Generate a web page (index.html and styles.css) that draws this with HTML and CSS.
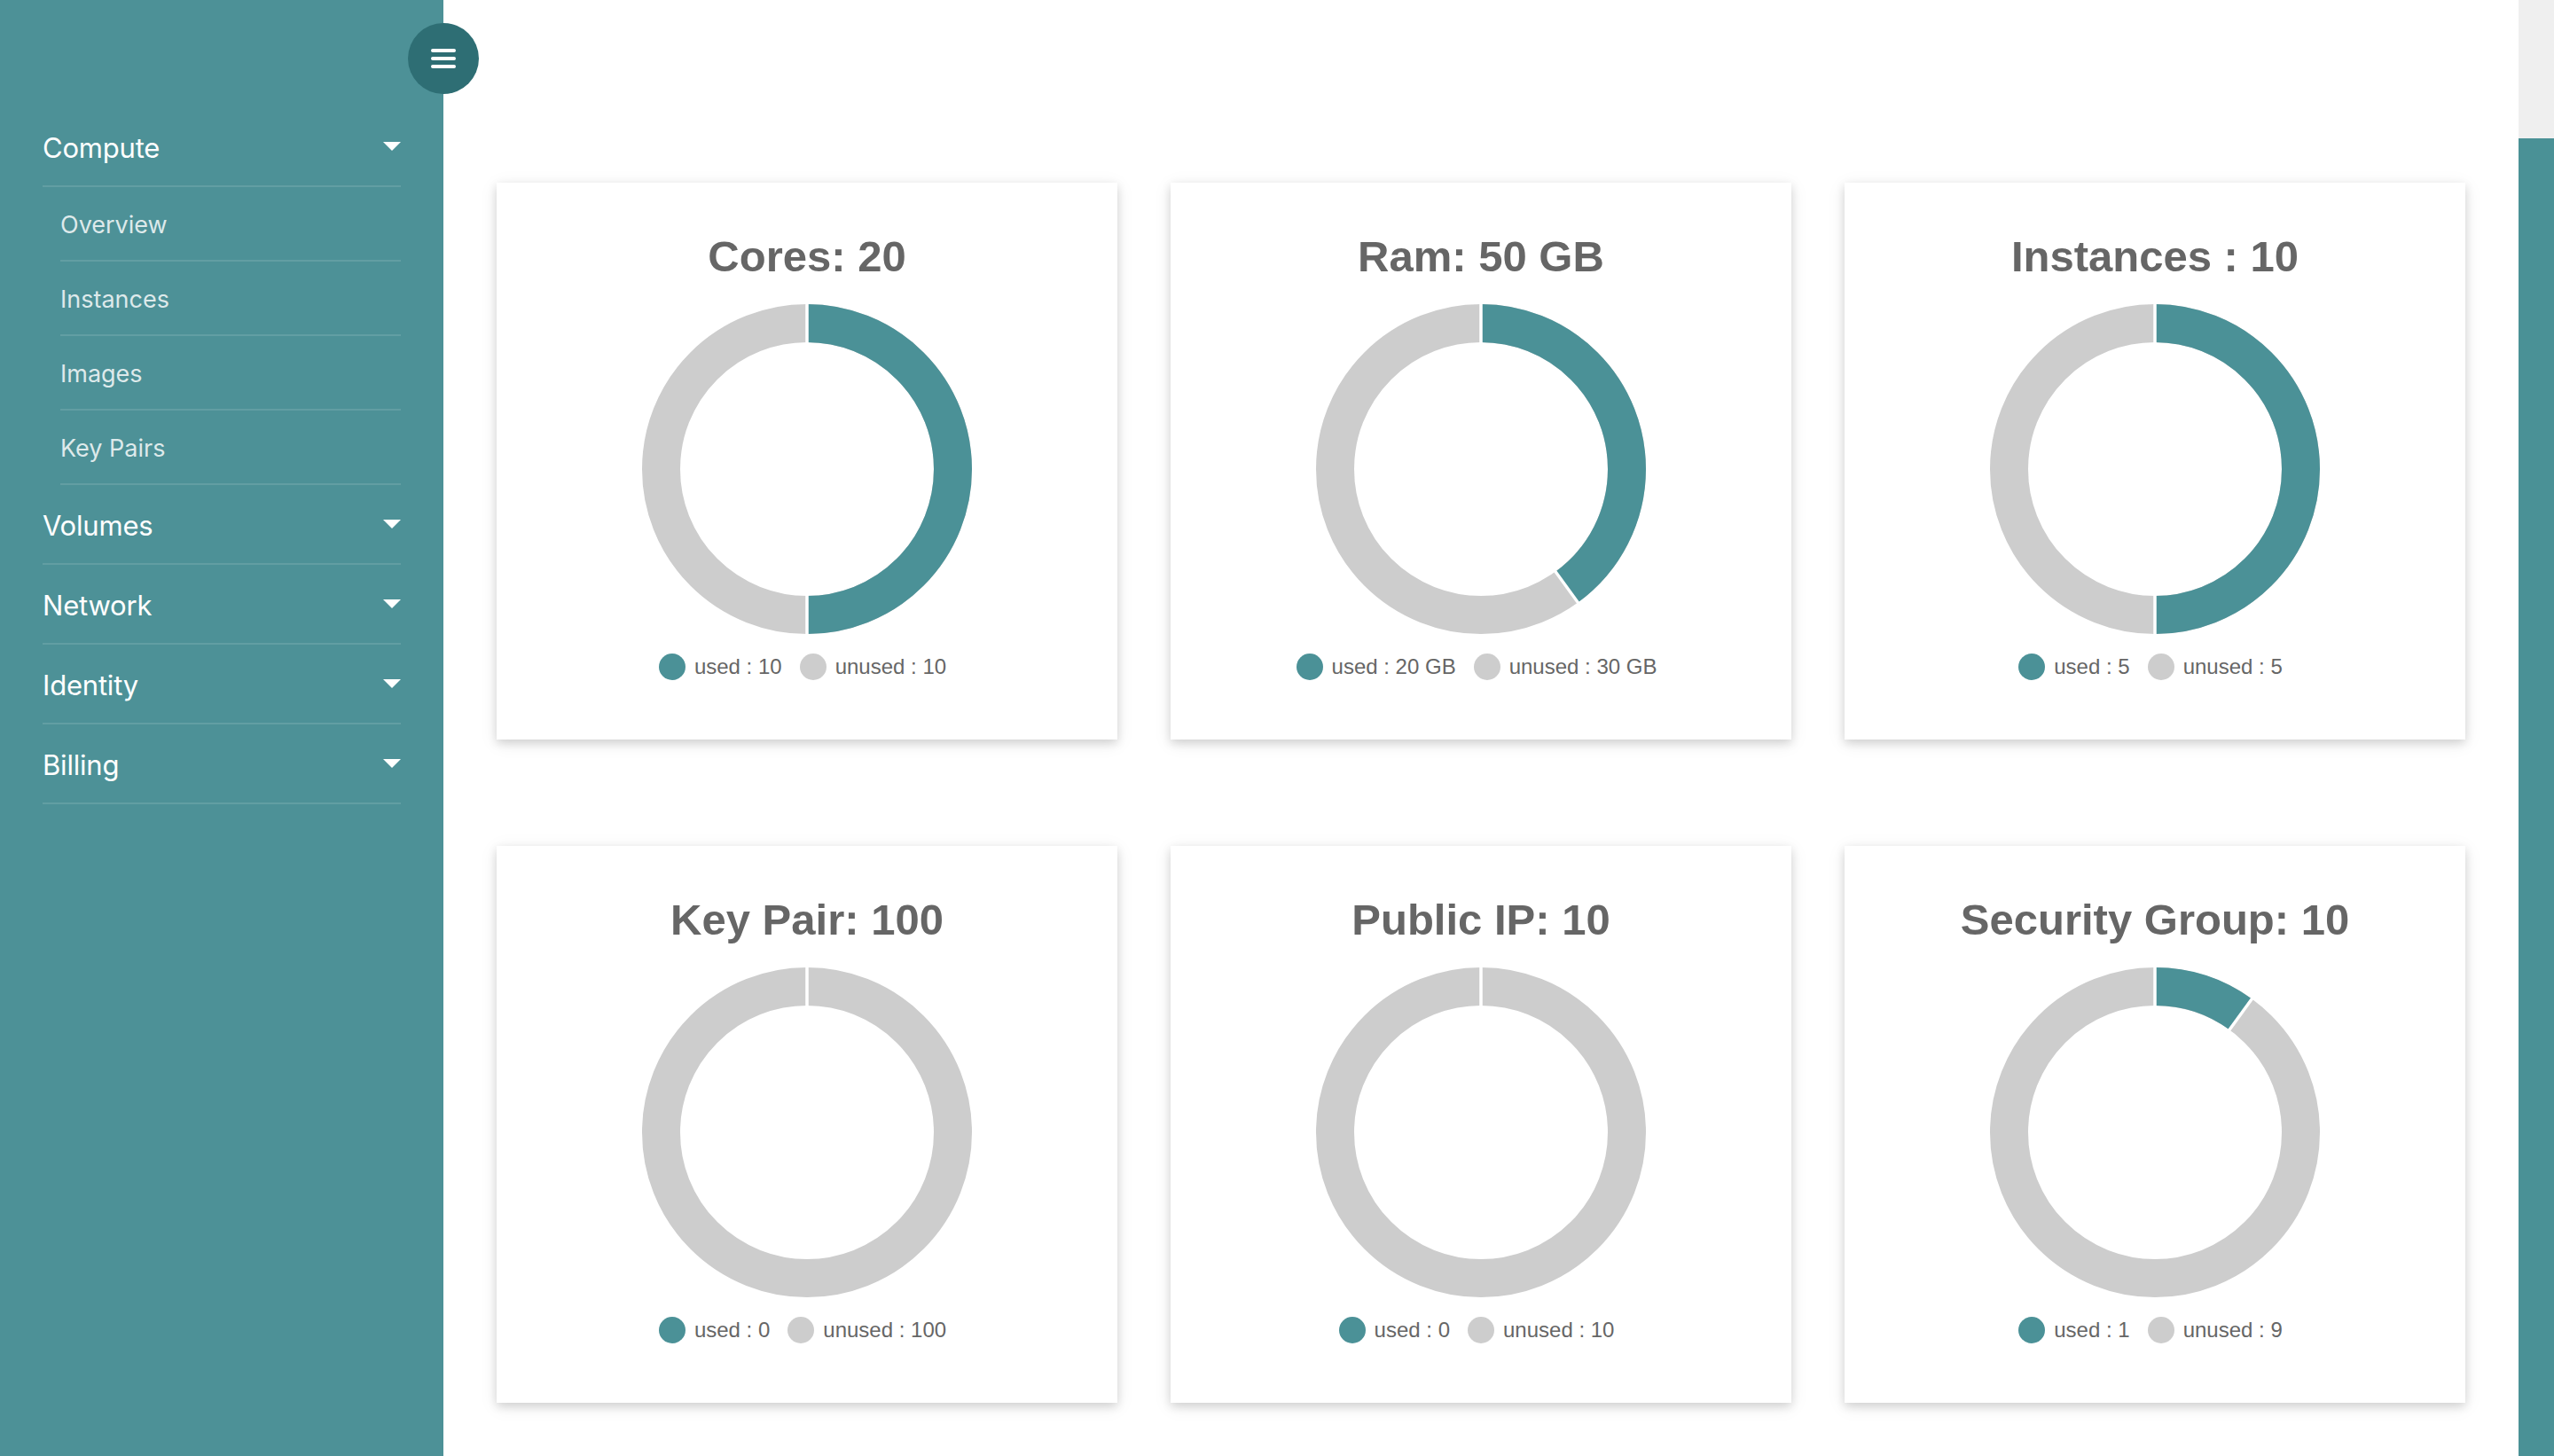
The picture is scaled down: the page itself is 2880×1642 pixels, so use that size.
FILE: index.html
```html
<!DOCTYPE html>
<html lang="en">
<head>
<meta charset="utf-8">
<title>Dashboard</title>
<link rel="stylesheet" href="styles.css">
</head>
<body>
<aside class="sidebar">
  <button class="menu-toggle" aria-label="Toggle menu">
    <span class="bar"></span><span class="bar"></span><span class="bar"></span>
  </button>
  <nav class="nav">
    <div class="nav-item"><span class="nav-label">Compute</span><span class="caret"></span></div>
    <div class="sub-item">Overview</div>
    <div class="sub-item">Instances</div>
    <div class="sub-item">Images</div>
    <div class="sub-item">Key Pairs</div>
    <div class="nav-item"><span class="nav-label">Volumes</span><span class="caret"></span></div>
    <div class="nav-item"><span class="nav-label">Network</span><span class="caret"></span></div>
    <div class="nav-item"><span class="nav-label">Identity</span><span class="caret"></span></div>
    <div class="nav-item"><span class="nav-label">Billing</span><span class="caret"></span></div>
  </nav>
</aside>

<main class="main">
  <div class="grid">
    <section class="card">
      <h2 class="card-title">Cores: 20</h2>
      <svg class="donut" viewBox="-186 -186 372 372" width="372" height="372">
        <circle class="ring-unused" r="164.5"/>
        <circle class="ring-used" r="164.5" pathLength="100" stroke-dasharray="50 100" transform="rotate(-90)"/>
        <line class="sep" x1="0" y1="0" x2="0" y2="-190"/>
        <line class="sep" x1="0" y1="0" x2="0" y2="190"/>
      </svg>
      <div class="legend">
        <span class="dot used"></span><span class="label">used : 10</span>
        <span class="dot unused"></span><span class="label">unused : 10</span>
      </div>
    </section>

    <section class="card">
      <h2 class="card-title">Ram: 50 GB</h2>
      <svg class="donut" viewBox="-186 -186 372 372" width="372" height="372">
        <circle class="ring-unused" r="164.5"/>
        <circle class="ring-used" r="164.5" pathLength="100" stroke-dasharray="40 100" transform="rotate(-90)"/>
        <line class="sep" x1="0" y1="0" x2="0" y2="-190"/>
        <line class="sep" x1="0" y1="0" x2="111.7" y2="153.7"/>
      </svg>
      <div class="legend">
        <span class="dot used"></span><span class="label">used : 20 GB</span>
        <span class="dot unused"></span><span class="label">unused : 30 GB</span>
      </div>
    </section>

    <section class="card">
      <h2 class="card-title">Instances : 10</h2>
      <svg class="donut" viewBox="-186 -186 372 372" width="372" height="372">
        <circle class="ring-unused" r="164.5"/>
        <circle class="ring-used" r="164.5" pathLength="100" stroke-dasharray="50 100" transform="rotate(-90)"/>
        <line class="sep" x1="0" y1="0" x2="0" y2="-190"/>
        <line class="sep" x1="0" y1="0" x2="0" y2="190"/>
      </svg>
      <div class="legend">
        <span class="dot used"></span><span class="label">used : 5</span>
        <span class="dot unused"></span><span class="label">unused : 5</span>
      </div>
    </section>

    <section class="card">
      <h2 class="card-title">Key Pair: 100</h2>
      <svg class="donut" viewBox="-186 -186 372 372" width="372" height="372">
        <circle class="ring-unused" r="164.5"/>
        <line class="sep" x1="0" y1="0" x2="0" y2="-190"/>
      </svg>
      <div class="legend">
        <span class="dot used"></span><span class="label">used : 0</span>
        <span class="dot unused"></span><span class="label">unused : 100</span>
      </div>
    </section>

    <section class="card">
      <h2 class="card-title">Public IP: 10</h2>
      <svg class="donut" viewBox="-186 -186 372 372" width="372" height="372">
        <circle class="ring-unused" r="164.5"/>
        <line class="sep" x1="0" y1="0" x2="0" y2="-190"/>
      </svg>
      <div class="legend">
        <span class="dot used"></span><span class="label">used : 0</span>
        <span class="dot unused"></span><span class="label">unused : 10</span>
      </div>
    </section>

    <section class="card">
      <h2 class="card-title">Security Group: 10</h2>
      <svg class="donut" viewBox="-186 -186 372 372" width="372" height="372">
        <circle class="ring-unused" r="164.5"/>
        <circle class="ring-used" r="164.5" pathLength="100" stroke-dasharray="10 100" transform="rotate(-90)"/>
        <line class="sep" x1="0" y1="0" x2="0" y2="-190"/>
        <line class="sep" x1="0" y1="0" x2="111.7" y2="-153.7"/>
      </svg>
      <div class="legend">
        <span class="dot used"></span><span class="label">used : 1</span>
        <span class="dot unused"></span><span class="label">unused : 9</span>
      </div>
    </section>
  </div>
</main>

<div class="scrollbar"><div class="thumb"></div></div>
</body>
</html>
```

FILE: styles.css
```css
html, body {
  margin: 0;
  padding: 0;
  height: 100%;
}

body {
  display: flex;
  overflow: hidden;
  background: #ffffff;
  font-family: Inter, "Noto Sans", sans-serif;
}

.sidebar {
  position: relative;
  z-index: 2;
  width: 500px;
  flex-shrink: 0;
  height: 100%;
  background: #4d9197;
}

.menu-toggle {
  position: absolute;
  left: 460px;
  top: 26px;
  width: 80px;
  height: 80px;
  border: none;
  border-radius: 50%;
  background: #2e6e74;
  padding: 0;
  display: flex;
  flex-direction: column;
  align-items: center;
  justify-content: center;
  gap: 4.5px;
}

.menu-toggle .bar {
  display: block;
  width: 28px;
  height: 4.5px;
  border-radius: 2px;
  background: #ffffff;
}

.nav {
  padding-top: 121px;
  display: flex;
  flex-direction: column;
}

.nav-item {
  margin-left: 48px;
  width: 404px;
  height: 88px;
  border-bottom: 2px solid rgba(255, 255, 255, 0.12);
  display: flex;
  align-items: center;
  justify-content: space-between;
  color: #ffffff;
  font-size: 31px;
  letter-spacing: -0.2px;
}

.nav-label {
  padding-top: 3px;
}

.caret {
  width: 0;
  height: 0;
  border-left: 10px solid transparent;
  border-right: 10px solid transparent;
  border-top: 10px solid #ffffff;
}

.sub-item {
  margin-left: 68px;
  width: 384px;
  height: 79px;
  padding-top: 3px;
  border-bottom: 2px solid rgba(255, 255, 255, 0.12);
  display: flex;
  align-items: center;
  color: rgba(255, 255, 255, 0.82);
  font-size: 27px;
}

.main {
  flex: 1;
  min-width: 0;
  height: 100%;
}

.grid {
  display: grid;
  grid-template-columns: repeat(3, 700px);
  column-gap: 60px;
  row-gap: 120px;
  padding: 206px 0 0 60px;
}

.card {
  height: 628px;
  box-sizing: border-box;
  background: #ffffff;
  box-shadow: 0 4px 10px rgba(0, 0, 0, 0.14), 0 4px 20px rgba(0, 0, 0, 0.08);
  padding-top: 59px;
  display: flex;
  flex-direction: column;
  align-items: center;
}

.card-title {
  margin: 0;
  font-family: "Liberation Sans", Arial, sans-serif;
  font-weight: 700;
  font-size: 49px;
  line-height: 48px;
  color: #666666;
}

.donut {
  display: block;
  margin-top: 30px;
}

.ring-unused {
  fill: none;
  stroke: #cdcdcd;
  stroke-width: 43;
}

.ring-used {
  fill: none;
  stroke: #4b9197;
  stroke-width: 43;
}

.sep {
  stroke: #ffffff;
  stroke-width: 3.5;
}

.legend {
  margin-top: 22px;
  margin-right: 10px;
  height: 30px;
  display: flex;
  align-items: center;
  font-family: "Liberation Sans", Arial, sans-serif;
  font-size: 24px;
  color: #666666;
}

.dot {
  width: 30px;
  height: 30px;
  border-radius: 50%;
  margin-right: 10px;
}

.dot.used {
  background: #4b9197;
}

.dot.unused {
  background: #cdcdcd;
}

.label + .dot {
  margin-left: 20px;
}

.scrollbar {
  width: 40px;
  flex-shrink: 0;
  height: 100%;
  background: #efefef;
  display: flex;
  flex-direction: column;
}

.thumb {
  margin-top: 156px;
  flex: 1;
  background: #4a9196;
}
```
